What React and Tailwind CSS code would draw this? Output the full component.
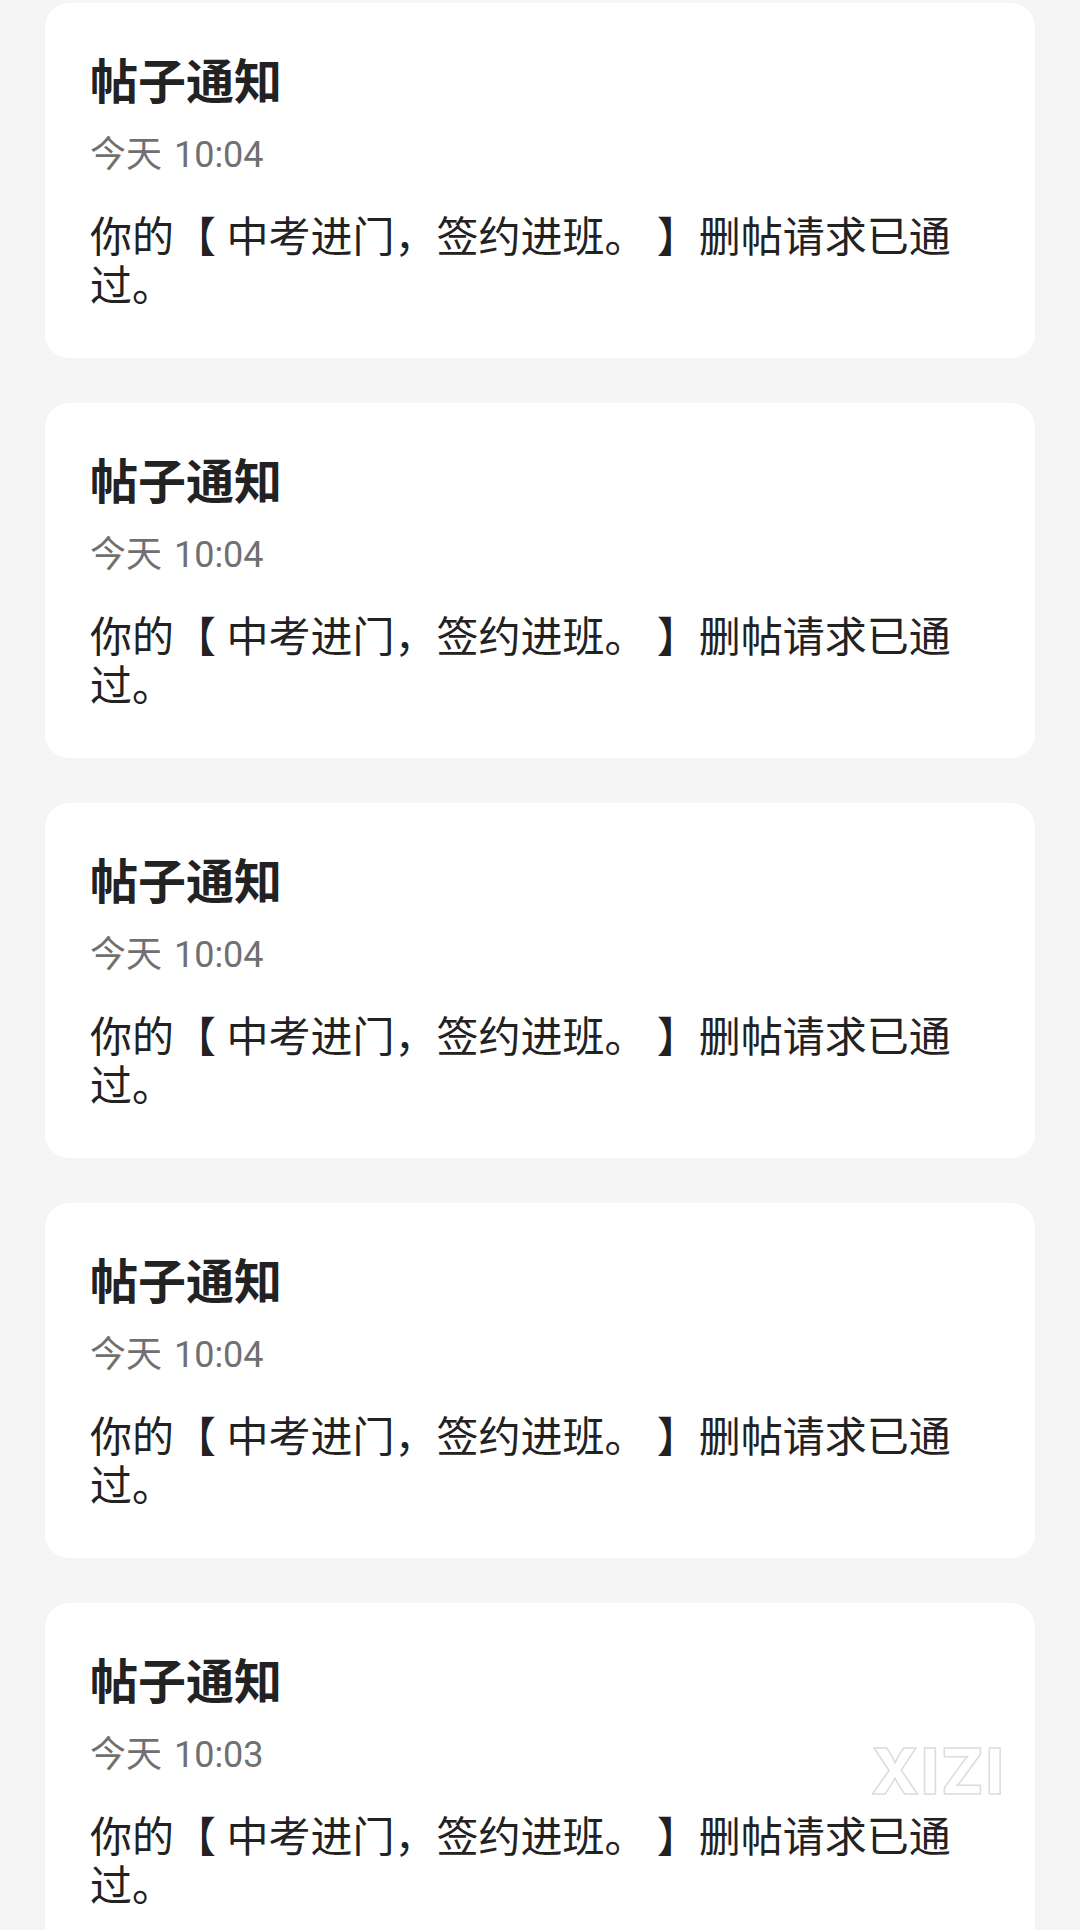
import React from 'react';

const notices = ['今天 10:04', '今天 10:04', '今天 10:04', '今天 10:04', '今天 10:03'];

const NoticeCard = ({ time }) => (
    <div className="shrink-0 h-[355px] rounded-[24px] bg-white pl-[45px] pr-[45px] pt-[52px]">
        <h2 className="text-[48px] leading-[56px] font-bold text-[#222222]">帖子通知</h2>
        <p className="mt-[22px] text-[36px] leading-[44px] text-[#707070] [word-spacing:3px]">{time}</p>
        <p className="mt-[36px] text-[42px] leading-[49px] text-[#222222]">你的【 中考进门，签约进班。 】删帖请求已通过。</p>
    </div>
);

const App = () => {
    return (
        <div
            className="relative h-[1930px] w-[1080px] overflow-hidden bg-[#f5f5f5] px-[45px] pt-[3px] flex flex-col gap-[45px]"
            style={{ fontFamily: 'Roboto, "Noto Sans CJK SC", sans-serif' }}
        >
            {notices.map((time, index) => (
                <NoticeCard key={index} time={time} />
            ))}
            {/* watermark */}
            <span
                className="absolute left-[871px] top-[1733px] text-[63px] leading-[76px] font-extrabold tracking-[2px] text-white [-webkit-text-stroke:1.5px_#dcdcdc]"
                style={{ fontFamily: 'Inter, sans-serif' }}
            >
                XIZI
            </span>
        </div>
    );
};

export default App;
